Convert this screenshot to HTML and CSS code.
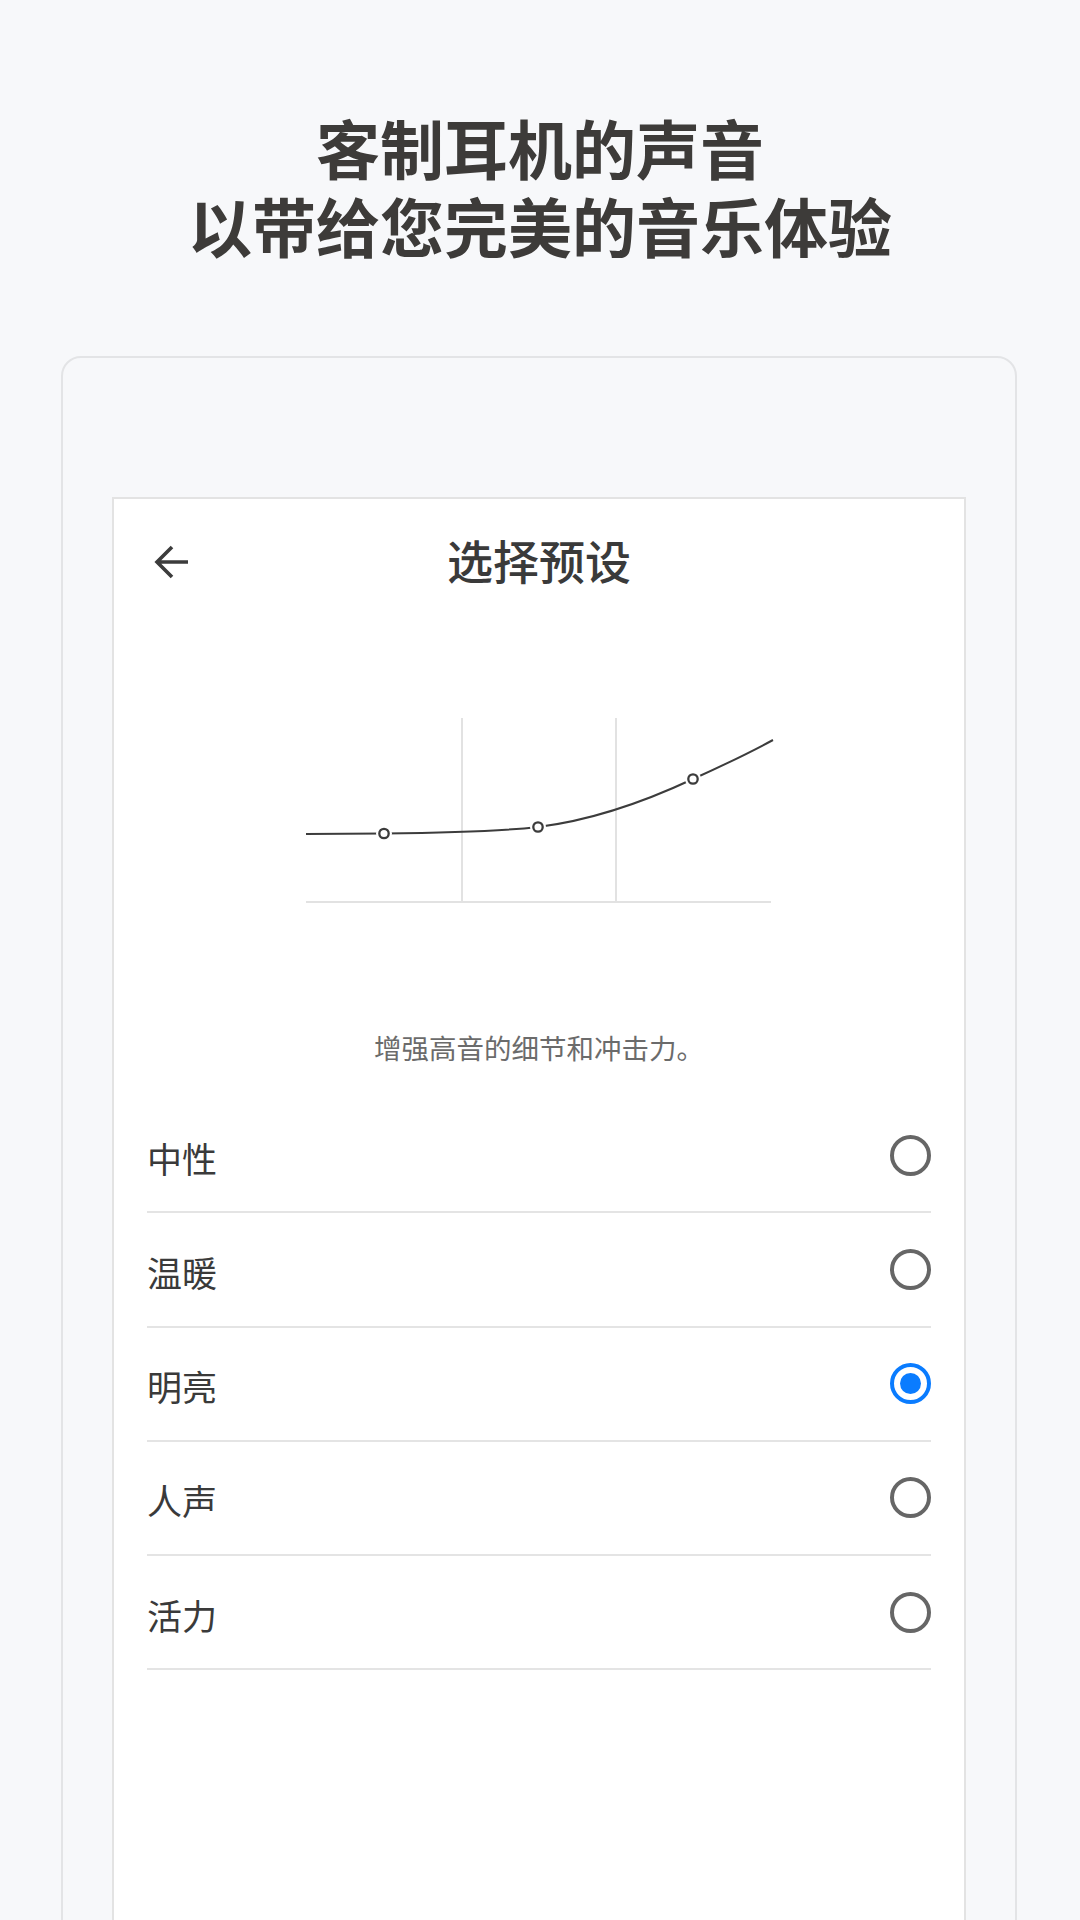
FILE: index.html
```html
<!DOCTYPE html>
<html lang="zh-CN">
<head>
    <meta charset="utf-8">
    <title>选择预设</title>
    <link rel="stylesheet" href="styles.css">
</head>
<body>
    <h1 class="headline">客制耳机的声音<br>以带给您完美的音乐体验</h1>

    <div class="device">
        <div class="screen">
            <div class="topbar">
                <svg class="back" width="36" height="34" viewBox="0 0 36 34">
                    <path d="M34 17H4M18 2L3 17l15 15" fill="none" stroke="#3c3c3c" stroke-width="3.6"/>
                </svg>
                <div class="topbar-title">选择预设</div>
            </div>

            <svg class="curve" width="470" height="200" viewBox="0 0 470 200">
                <!-- grid -->
                <line x1="2" y1="192" x2="467" y2="192" stroke="#e2e2e2" stroke-width="2"/>
                <line x1="158" y1="8" x2="158" y2="192" stroke="#e2e2e2" stroke-width="2"/>
                <line x1="312" y1="8" x2="312" y2="192" stroke="#e2e2e2" stroke-width="2"/>
                <!-- eq curve -->
                <path d="M2 124 L80 123.5 C130 123 190 122 234 117 C290 110 340 92 389 69 C420 55 445 43 469 30"
                      fill="none" stroke="#3c3c3c" stroke-width="2"/>
                <circle cx="80" cy="123.5" r="8" fill="#fff"/>
                <circle cx="234" cy="117" r="8" fill="#fff"/>
                <circle cx="389" cy="69" r="8" fill="#fff"/>
                <circle cx="80" cy="123.5" r="4.7" fill="#fff" stroke="#3c3c3c" stroke-width="2.3"/>
                <circle cx="234" cy="117" r="4.7" fill="#fff" stroke="#3c3c3c" stroke-width="2.3"/>
                <circle cx="389" cy="69" r="4.7" fill="#fff" stroke="#3c3c3c" stroke-width="2.3"/>
            </svg>

            <p class="preset-desc">增强高音的细节和冲击力。</p>

            <ul class="preset-list">
                <li class="preset"><span>中性</span><span class="radio"></span></li>
                <li class="preset"><span>温暖</span><span class="radio"></span></li>
                <li class="preset"><span>明亮</span><span class="radio checked"></span></li>
                <li class="preset"><span>人声</span><span class="radio"></span></li>
                <li class="preset"><span>活力</span><span class="radio"></span></li>
            </ul>
        </div>
    </div>
</body>
</html>
```

FILE: styles.css
```css
html, body {
    margin: 0;
    padding: 0;
}

body {
    height: 1920px;
    overflow: hidden;
    background-color: #f7f8fa;
    font-family: "Noto Sans CJK SC", "Noto Sans", sans-serif;
    color: #3c3c3c;
}

.headline {
    margin: 0;
    padding-top: 107px;
    font-size: 64px;
    line-height: 78px;
    font-weight: 700;
    text-align: center;
    color: #3d3b39;
}

.device {
    margin: 93px 63px 0 61px;
    padding: 139px 49px 0 49px;
    height: 1600px;
    border: 2px solid #e3e4e6;
    border-radius: 20px;
    background-color: #f7f8fa;
}

.screen {
    height: 1500px;
    background-color: #fff;
    border: 2px solid #e3e3e3;
}

.topbar {
    position: relative;
    height: 120px;
    display: flex;
    align-items: center;
    justify-content: center;
}

.back {
    position: absolute;
    left: 40px;
    top: 46px;
}

.topbar-title {
    font-size: 46px;
    font-weight: 500;
    color: #3a3a3a;
    line-height: 1;
}

.curve {
    display: block;
    margin: 91px auto 0 auto;
}

.preset-desc {
    margin: 119px 0 0 0;
    font-size: 27.5px;
    line-height: 36px;
    text-align: center;
    color: #6b6b6b;
}

.preset-list {
    list-style: none;
    margin: 34px 33px 0 33px;
    padding: 0;
}

.preset {
    height: 112.25px;
    display: flex;
    align-items: center;
    justify-content: space-between;
    border-bottom: 2px solid #e4e4e4;
    font-size: 35px;
    color: #3a3a3a;
}

.preset span:first-child {
    padding-top: 4px;
}

.radio {
    box-sizing: border-box;
    width: 41px;
    height: 41px;
    border: 4px solid #666;
    border-radius: 50%;
    display: flex;
    align-items: center;
    justify-content: center;
}

.radio.checked {
    border-color: #0a7cff;
}

.radio.checked::after {
    content: "";
    width: 21px;
    height: 21px;
    border-radius: 50%;
    background-color: #0a7cff;
}
```
